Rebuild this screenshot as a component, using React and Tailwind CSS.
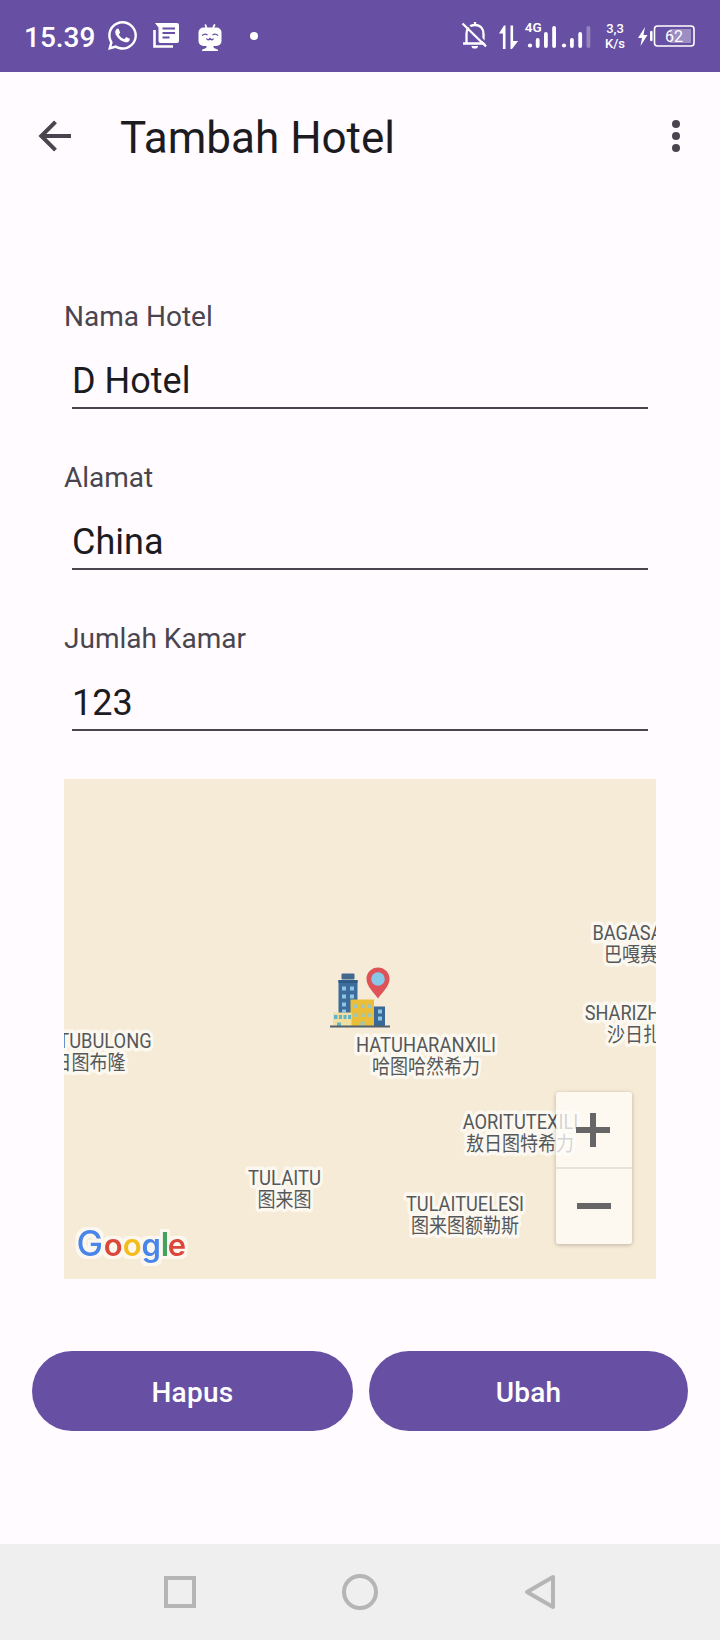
import React from 'react';
import { FaWhatsapp } from 'react-icons/fa';

const FIELDS = [
  { label: 'Nama Hotel', value: 'D Hotel' },
  { label: 'Alamat', value: 'China' },
  { label: 'Jumlah Kamar', value: '123' },
];

// Coordinates are relative to the map's top left corner.
const PLACES = [
  { name: 'BAGASA', local: '巴嘎赛', x: 563.5, y: 160.5, w: 70, lx: 567 },
  { name: 'SHARIZH', local: '沙日扎', x: 558.5, y: 240.5, w: 75.5, lx: 570 },
  { name: 'TUBULONG', local: '日图布隆', x: 41, y: 268.5, w: 93.3, lx: 25.5 },
  { name: 'HATUHARANXILI', local: '哈图哈然希力', x: 362, y: 272.5, w: 140 },
  { name: 'AORITUTEXILI', local: '敖日图特希力', x: 456.5, y: 350, w: 115.5, lx: 456 },
  { name: 'TULAITU', local: '图来图', x: 220.5, y: 405.5, w: 73 },
  { name: 'TULAITUELESI', local: '图来图额勒斯', x: 401, y: 431.5, w: 118 },
];

function StatusBar() {
  return (
    <header className="flex h-[72px] items-center justify-between bg-[#6750a3] pl-6 pr-6 text-white">
      <div className="flex items-center">
        <span className="w-[84px] pt-[3px] text-[28px] font-medium leading-8">15.39</span>
        <FaWhatsapp className="h-[33px] w-[33px] -ml-[2px] -mt-[2px]" />
        <svg className="ml-[14px] h-[26px] w-[26px]" viewBox="0 0 26 26" fill="none">
          <path d="M1.500 7v16.500H20" stroke="white" strokeWidth="2.600" />
          <path d="M2 0h22a2 2 0 0 1 2 2v16a2 2 0 0 1-2 2H7.500a2 2 0 0 1-2-2V4.500z" fill="white" />
          <path d="M9.500 5.500h12.500M9.500 10h12.500M9.500 14.500h7" stroke="#6750a3" strokeWidth="2.200" />
        </svg>
        <svg className="ml-[18px] mt-0.5 h-[27px] w-[26px]" viewBox="0 0 26 27">
          <path d="M9.500 4 8.500 1M16 4l1.500-3" stroke="white" strokeWidth="1.700" strokeLinecap="round" />
          <rect x="1.500" y="3.500" width="23" height="18.500" rx="5" fill="white" />
          <path d="M10 21.500h6l1 2.500 4 1.800v1.200H5v-1.200L9 24z" fill="white" />
          <path d="M5 11.500q3-2.500 5.500-.5M15.500 11q3-2 5.500.5M9.500 14.500q1.500 2.500 3.500 0 2 2.500 3.500 0" stroke="#6750a3" strokeWidth="1.400" fill="none" />
        </svg>
        <span className="ml-[27px] h-2 w-2 rounded-full bg-white" />
      </div>
      <div className="flex items-center">
        <svg className="h-[50px] w-[98px]" viewBox="0 0 98 50">
          <g fill="none" stroke="white" strokeWidth="2.300">
            <path d="M5.500 32V23c0-5 3-9 8.500-9s8.500 4 8.500 9v9M2 32.500h23M14 14v-3" />
          </g>
          <path d="M3.500 11 27 34" stroke="#6750a3" strokeWidth="2" />
          <path d="M1.500 12.500 25 35.500" stroke="white" strokeWidth="2.300" />
          <path d="M10.500 35h6.500a3.200 2.500 0 0 1-6.500 0z" fill="white" />
          <path d="M38 22.500 43 14.500h1.500V38h-2.600V22.500zM49.500 14.500h2.600v15.500h5L51 38h-1.500z" fill="white" />
          <text x="63.800" y="21" fontSize="13.500" fontWeight="600" fill="white">4G</text>
          <g fill="white">
            <circle cx="69" cy="34.500" r="2.100" />
            <rect x="74.800" y="27" width="3.800" height="10" rx="1.900" />
            <rect x="83" y="21" width="3.800" height="16" rx="1.900" />
            <rect x="91.200" y="15" width="3.800" height="22" rx="1.900" />
          </g>
        </svg>
        <svg className="ml-[2px] h-[50px] w-[31px]" viewBox="0 0 31 50" fill="white">
          <circle cx="3" cy="34.500" r="2.100" />
          <rect x="9" y="27" width="3.800" height="10" rx="1.900" />
          <rect x="17.300" y="21" width="3.800" height="16" rx="1.900" />
          <rect x="25.500" y="15" width="3.800" height="22" rx="1.900" opacity="0.300" />
        </svg>
        <div className="ml-[11px] w-[24px] text-center text-[13px] font-medium leading-[15px]">
          <div>3,3</div>
          <div>K/s</div>
        </div>
        <svg className="ml-[10px] h-[26px] w-[59px]" viewBox="0 0 59 26">
          <path d="M8 4 1 15h4l-1.500 8L10.500 12h-4z" fill="white" />
          <path d="M14.300 9v8" stroke="white" strokeWidth="2.500" strokeLinecap="round" />
          <rect x="17.500" y="3" width="39.500" height="20" rx="3" fill="none" stroke="white" strokeWidth="1.600" />
          <rect x="33" y="6" width="21" height="14" fill="white" opacity="0.350" />
          <text x="28" y="18.800" fontSize="16" fill="white">62</text>
        </svg>
      </div>
    </header>
  );
}

function AppBar() {
  return (
    <div className="flex h-32 items-center px-[38px]">
      <svg className="h-8 w-[34px] -mt-px" viewBox="0 0 34 32" fill="none" stroke="#49454f" strokeWidth="4">
        <path d="M33 16H4M17.500 1.800 3.300 16l14.200 14.200" />
      </svg>
      <h1 className="ml-12 pt-1 text-[44px] leading-[52px] text-[#1c1b1f]">Tambah Hotel</h1>
      <div className="ml-auto mr-[2px] flex flex-col gap-1">
        <span className="h-2 w-2 rounded-full bg-[#49454f]" />
        <span className="h-2 w-2 rounded-full bg-[#49454f]" />
        <span className="h-2 w-2 rounded-full bg-[#49454f]" />
      </div>
    </div>
  );
}

function Field({ label, value }) {
  return (
    <div className="h-28">
      <div className="pt-px text-[28px] leading-[38px] text-[#49454f]">{label}</div>
      <div className="mx-2 mt-6 h-[49px] border-b-2 border-[#49454f] text-[36px] leading-[42px] text-[#1c1b1f]">
        {value}
      </div>
    </div>
  );
}

function HotelMarker() {
  return (
    <g transform="translate(266 192.500)">
      <rect x="11.500" y="2" width="13" height="6" rx="1" fill="#44698f" />
      <rect x="8.500" y="8.500" width="19" height="46" fill="#3b6c9c" />
      <rect x="8.500" y="8.500" width="19" height="3" fill="#315b87" />
      <path d="M12 15h4v4h-4zM20 15h4v4h-4zM12 23h4v4h-4zM20 23h4v4h-4zM12 31h4v4h-4zM12 38h4v3h-4z" fill="#8cc6e3" />
      <rect x="43" y="35" width="12" height="20" fill="#376897" />
      <path d="M48 38h4v4h-4zM48 45h4v4h-4z" fill="#8cc6e3" />
      <rect x="20.500" y="28" width="23.500" height="27" fill="#eabd3a" />
      <path d="M24 33h3.500v3.500H24zM31 33h3.500v3.500H31zM38 33h3.500v3.500H38zM24 42h3.500v3.500H24zM31 42h3.500v3.500H31zM38 42h3.500v3.500H38zM30.500 50h4v5h-4z" fill="#9ac8c0" />
      <rect x="3" y="41" width="18.500" height="14" fill="#f0dfa0" />
      <path d="M4 43.500h3.500v4H4zM9 43.500h3v4H9zM13.500 43.500h3v4h-3zM18 43.500h3v4h-3zM7 51h4v4H7z" fill="#62b5c6" />
      <path d="M0 55h60" stroke="#53616d" strokeWidth="2" />
      <path d="M48-4a11.500 11.500 0 0 1 11.500 11.500C59.500 15 52 21 48 27 44 21 36.500 15 36.500 7.500A11.500 11.500 0 0 1 48-4z" fill="#dd5357" />
      <circle cx="48" cy="7.500" r="6.800" fill="#87c7e8" />
    </g>
  );
}

function GoogleMark() {
  return (
    <g fontFamily="Inter, sans-serif" fontWeight="600" filter="url(#halo)">
      <text x="12.500" y="476.500" fontSize="35.500" fontWeight="500" fill="#4a85ea">G</text>
      <text x="39.800" y="476.500" fontSize="31" fill="#dc473b">o</text>
      <text x="58.800" y="476.500" fontSize="31" fill="#f3bb1c">o</text>
      <text x="77.600" y="476.500" fontSize="31" fill="#4a85ea">g</text>
      <text x="96.700" y="476.500" fontSize="32" fill="#43a35c">l</text>
      <text x="103.800" y="476.500" fontSize="31" fill="#dc473b">e</text>
    </g>
  );
}

function HotelMap() {
  return (
    <div className="relative mt-12 h-[500px] w-full overflow-hidden bg-[#f6ebd6]">
      <svg className="block h-[500px] w-[592px]" viewBox="0 0 592 500">
        <defs>
          <filter id="halo" x="-10%" y="-20%" width="120%" height="140%" colorInterpolationFilters="sRGB">
            <feMorphology in="SourceAlpha" operator="dilate" radius="3" result="grown" />
            <feGaussianBlur in="grown" stdDeviation="0.700" result="soft" />
            <feFlood floodColor="#fcf8f0" />
            <feComposite in2="soft" operator="in" result="rim" />
            <feMerge>
              <feMergeNode in="rim" />
              <feMergeNode in="SourceGraphic" />
            </feMerge>
          </filter>
        </defs>
        <g fill="#55585b" stroke="#fcf8f0" strokeWidth="7" strokeLinejoin="round" paintOrder="stroke" textAnchor="middle">
          {PLACES.map((p) => (
            <g key={p.name}>
              <text
                x={p.lx ?? p.x}
                y={p.y + 22}
                fontSize="20"
                fontFamily="'Noto Sans CJK SC', sans-serif"
                textLength={p.local.length * 18}
                lengthAdjust="spacingAndGlyphs"
              >
                {p.local}
              </text>
              <text x={p.x} y={p.y} fontSize="21" textLength={p.w} lengthAdjust="spacingAndGlyphs">{p.name}</text>
            </g>
          ))}
        </g>
        <HotelMarker />
        <GoogleMark />
      </svg>
      <div className="absolute bottom-[35px] right-6 flex h-[152px] w-[76px] flex-col rounded-[3px] bg-[#fffefa]/75 shadow-[0_1px_4px_rgba(0,0,0,0.250)]">
        <button className="flex h-[75px] items-center justify-center" aria-label="+">
          <svg className="-ml-[2px] h-[34px] w-[34px]" viewBox="0 0 34 34" stroke="#666666" strokeWidth="6">
            <path d="M0 17h34M17 0v34" />
          </svg>
        </button>
        <span className="h-0.5 bg-[#e8e4dd]" />
        <button className="flex h-[75px] items-center justify-center pb-0.5" aria-label="−">
          <span className="h-1.5 w-[34px] bg-[#666666]" />
        </button>
      </div>
    </div>
  );
}

function NavBar() {
  return (
    <nav className="mt-auto flex h-24 items-center justify-between bg-[#efefef] pl-[164px] pr-[164px]">
      <span className="h-8 w-8 border-4 border-[#b5b5b5]" />
      <span className="h-9 w-9 rounded-full border-4 border-[#b5b5b5]" />
      <svg className="h-9 w-8" viewBox="0 0 32 36" fill="none" stroke="#b5b5b5" strokeWidth="4" strokeLinejoin="round">
        <path d="M29 3v30L3 18z" />
      </svg>
    </nav>
  );
}

export default function App() {
  return (
    <div className="flex h-[1640px] w-[720px] flex-col bg-[#fffbff] font-[Roboto,'Noto_Sans_CJK_SC',sans-serif]">
      <StatusBar />
      <AppBar />
      <main className="px-16 pt-[97px]">
        <div className="flex flex-col gap-[49px]">
          {FIELDS.map((f) => (
            <Field key={f.label} label={f.label} value={f.value} />
          ))}
        </div>
        <HotelMap />
      </main>
      <div className="mt-[72px] flex gap-4 px-8">
        <button className="h-20 w-[321px] rounded-full bg-[#6750a3] pt-1 text-[28px] font-medium tracking-[0.3px] text-white">Hapus</button>
        <button className="h-20 w-[319px] rounded-full bg-[#6750a3] pt-1 text-[28px] font-medium tracking-[0.2px] text-white">Ubah</button>
      </div>
      <NavBar />
    </div>
  );
}
